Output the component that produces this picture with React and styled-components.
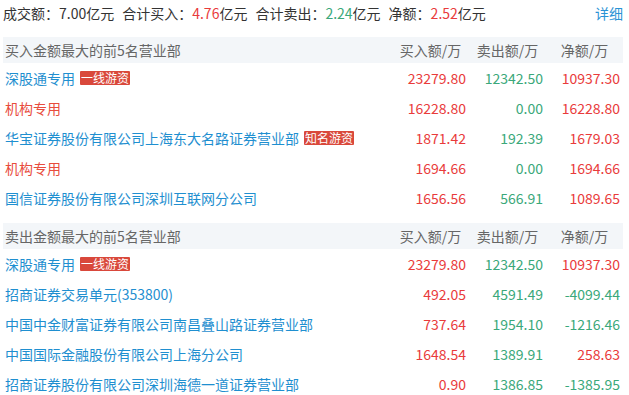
import React from "react";
import styled, { createGlobalStyle } from "styled-components";

const GlobalStyle = createGlobalStyle`
  body {
    margin: 0;
    background: #fff;
    font-family: "Noto Sans CJK SC", "Noto Sans", sans-serif;
    font-size: 14px;
    color: #333;
  }
`;

const Page = styled.div`
  width: 620px;
  padding: 0 3px;
`;

const Summary = styled.div`
  display: flex;
  align-items: center;
  height: 25px;
  margin-bottom: 12px;
`;

const Stat = styled.span`
  margin-right: 8px;
  white-space: nowrap;
`;

const Num = styled.span`
  color: ${(props) => (props.up ? "#e93b3b" : "#3aa87a")};
`;

const Detail = styled.a`
  margin-left: auto;
  color: #2a93d5;
  text-decoration: none;
  cursor: pointer;
`;

const Section = styled.div`
  margin-bottom: 10px;
`;

const Row = styled.div`
  display: grid;
  grid-template-columns: 1fr 77px 77px 77px;
  align-items: center;
  height: ${(props) => (props.head ? 26 : 30)}px;
  background: ${(props) => (props.head ? "#f3f6f9" : "transparent")};
  color: ${(props) => (props.head ? "#666" : "#333")};
  white-space: nowrap;
`;

const NameCell = styled.div`
  display: flex;
  align-items: center;
  padding-left: 2px;
  color: ${(props) => props.color || "inherit"};
`;

const HeadCell = styled.div`
  text-align: center;
`;

const ValueCell = styled.div`
  text-align: right;
  padding-right: 3px;
  color: ${(props) => (props.up ? "#e93b3b" : "#3aa87a")};
`;

const Badge = styled.span`
  margin-left: 5px;
  padding: 0 1px;
  height: 14px;
  line-height: 14px;
  font-size: 12px;
  color: #fff;
  background: #d9483b;
  border-radius: 1px;
`;

const buyList = [
  { name: "深股通专用", tag: "一线游资", buy: "23279.80", sell: "12342.50", net: "10937.30" },
  { name: "机构专用", org: true, buy: "16228.80", sell: "0.00", net: "16228.80" },
  { name: "华宝证券股份有限公司上海东大名路证券营业部", tag: "知名游资", buy: "1871.42", sell: "192.39", net: "1679.03" },
  { name: "机构专用", org: true, buy: "1694.66", sell: "0.00", net: "1694.66" },
  { name: "国信证券股份有限公司深圳互联网分公司", buy: "1656.56", sell: "566.91", net: "1089.65" },
];

const sellList = [
  { name: "深股通专用", tag: "一线游资", buy: "23279.80", sell: "12342.50", net: "10937.30" },
  { name: "招商证券交易单元(353800)", buy: "492.05", sell: "4591.49", net: "-4099.44" },
  { name: "中国中金财富证券有限公司南昌叠山路证券营业部", buy: "737.64", sell: "1954.10", net: "-1216.46" },
  { name: "中国国际金融股份有限公司上海分公司", buy: "1648.54", sell: "1389.91", net: "258.63" },
  { name: "招商证券股份有限公司深圳海德一道证券营业部", buy: "0.90", sell: "1386.85", net: "-1385.95" },
];

const Table = ({ title, list }) => (
  <Section>
    <Row head>
      <NameCell>{title}</NameCell>
      <HeadCell>买入额/万</HeadCell>
      <HeadCell>卖出额/万</HeadCell>
      <HeadCell>净额/万</HeadCell>
    </Row>
    {list.map((item, index) => (
      <Row key={index}>
        <NameCell color={item.org ? "#e84c3d" : "#1f8fd0"}>
          {item.name}
          {item.tag && <Badge>{item.tag}</Badge>}
        </NameCell>
        <ValueCell up>{item.buy}</ValueCell>
        <ValueCell>{item.sell}</ValueCell>
        <ValueCell up={!item.net.startsWith("-")}>{item.net}</ValueCell>
      </Row>
    ))}
  </Section>
);

export default function App() {
  return (
    <>
      <GlobalStyle />
      <Page>
        <Summary>
          <Stat>成交额：7.00亿元</Stat>
          <Stat>
            合计买入：<Num up>4.76</Num>亿元
          </Stat>
          <Stat>
            合计卖出：<Num>2.24</Num>亿元
          </Stat>
          <Stat>
            净额：<Num up>2.52</Num>亿元
          </Stat>
          <Detail>详细</Detail>
        </Summary>
        <Table title="买入金额最大的前5名营业部" list={buyList} />
        <Table title="卖出金额最大的前5名营业部" list={sellList} />
      </Page>
    </>
  );
}
